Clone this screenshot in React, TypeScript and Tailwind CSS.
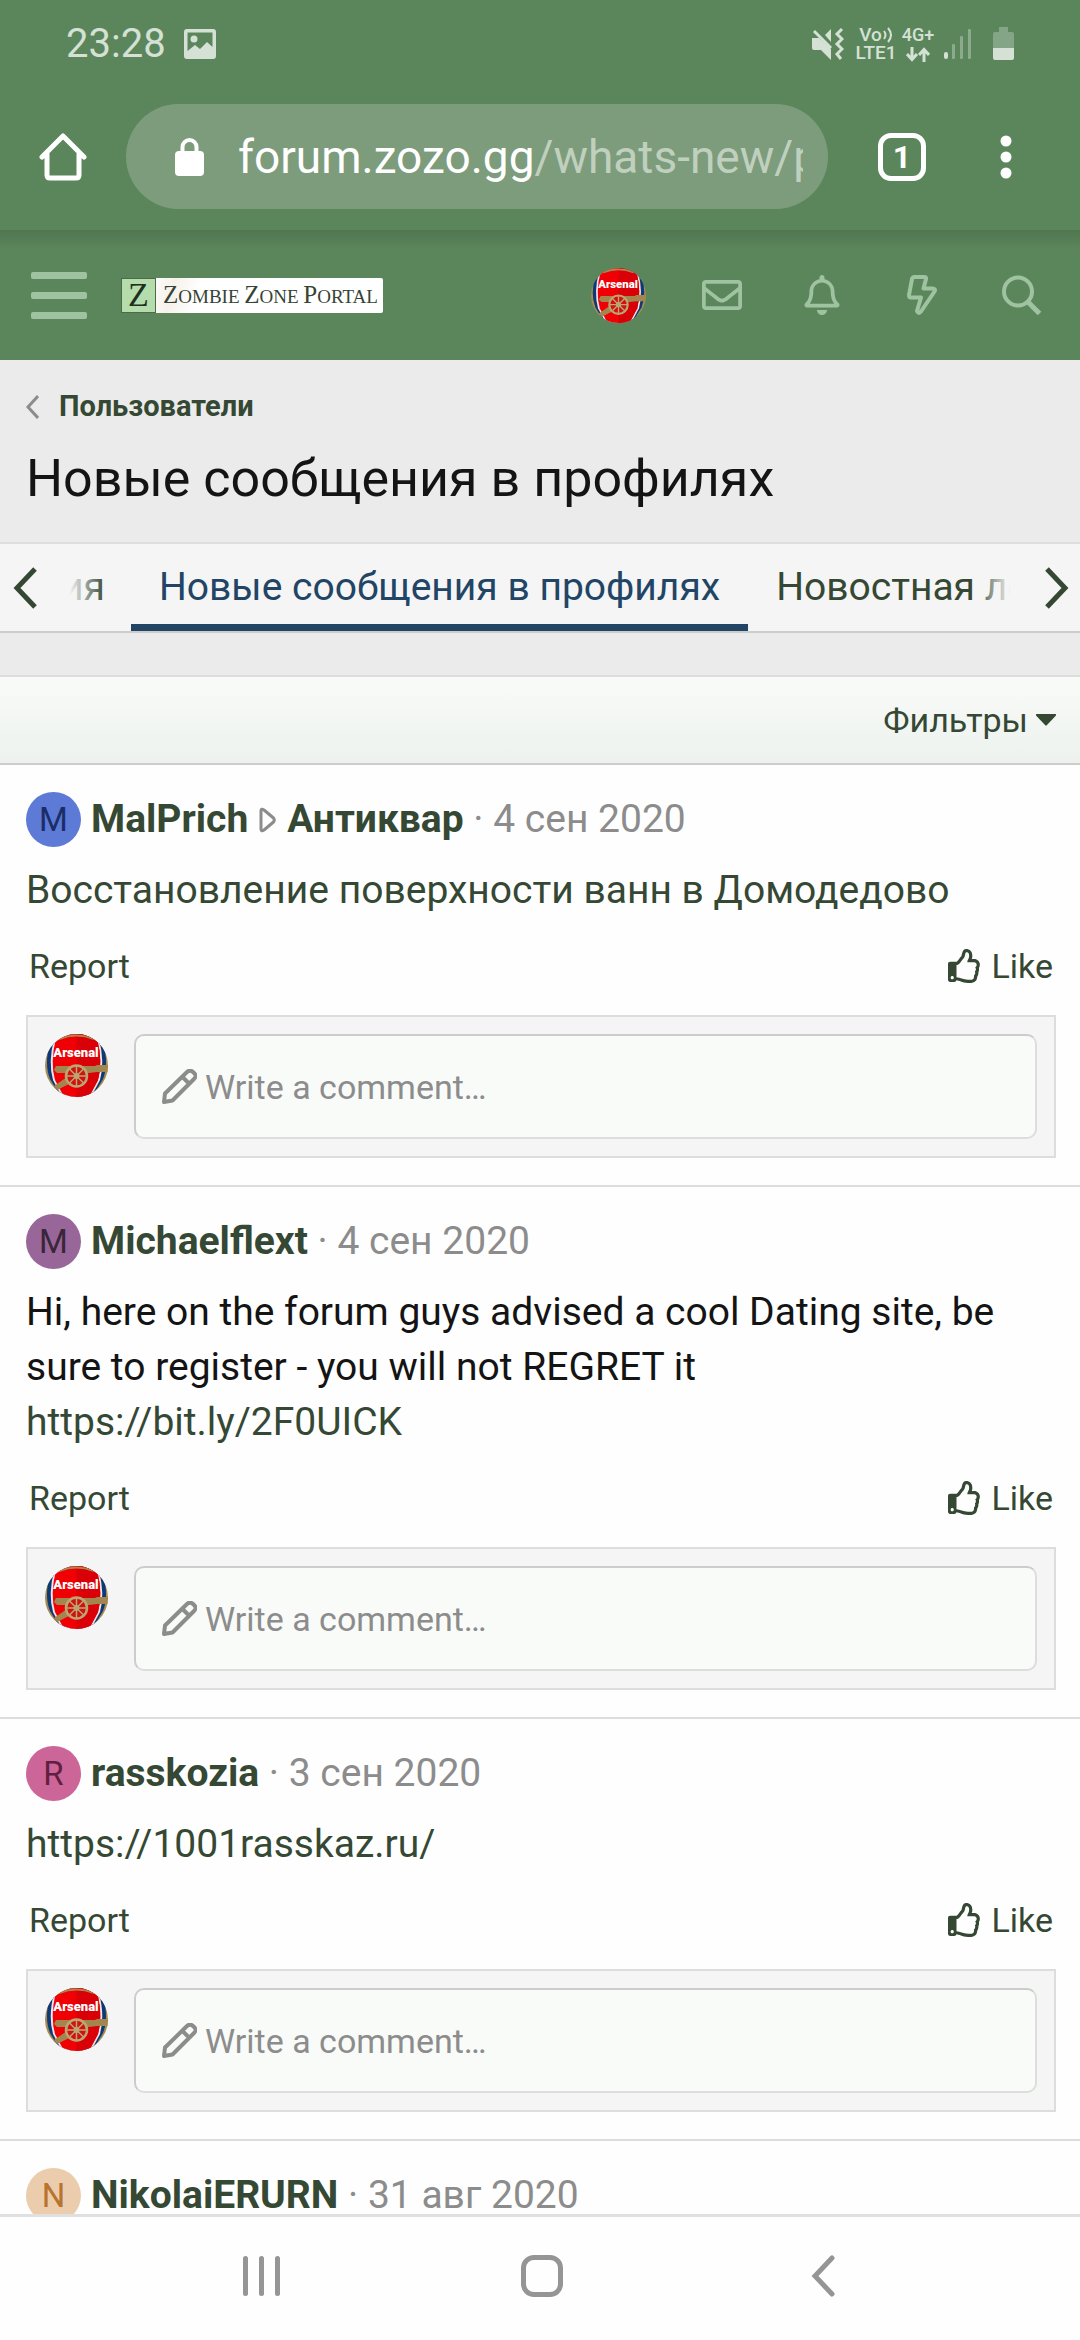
import type { ReactNode } from "react";
import { FaRegBell, FaRegEnvelope, FaRegThumbsUp } from "react-icons/fa";

type Post = {
  id: number;
  author: string;
  target?: string;
  date: string;
  letter: string;
  avatarClass: string;
  body: ReactNode;
};

const linkClass = "text-[#354834]";

const posts: Post[] = [
  {
    id: 1,
    author: "MalPrich",
    target: "Антиквар",
    date: "4 сен 2020",
    letter: "M",
    avatarClass: "bg-[#5c7ad6] text-[#1b2d66]",
    body: <a href="#" className={linkClass}>Восстановление поверхности ванн в Домодедово</a>,
  },
  {
    id: 2,
    author: "Michaelflext",
    date: "4 сен 2020",
    letter: "M",
    avatarClass: "bg-[#996699] text-[#392639]",
    body: (
      <>
        Hi, here on the forum guys advised a cool Dating site, be sure to register - you will not REGRET it
        <br />
        <a href="#" className={linkClass}>https://bit.ly/2F0UICK</a>
      </>
    ),
  },
  {
    id: 3,
    author: "rasskozia",
    date: "3 сен 2020",
    letter: "R",
    avatarClass: "bg-[#cc6699] text-[#602040]",
    body: <a href="#" className={linkClass}>https://1001rasskaz.ru/</a>,
  },
  {
    id: 4,
    author: "NikolaiERURN",
    date: "31 авг 2020",
    letter: "N",
    avatarClass: "bg-[#ebccad] text-[#b8732e]",
    body: "",
  },
];

function Crest({ className }: { className: string }) {
  return (
    <svg viewBox="0 0 63 63" className={className} role="img" aria-label="Arsenal">
      <defs>
        <clipPath id="crest-clip">
          <circle cx="31.5" cy="31.5" r="31.5" />
        </clipPath>
      </defs>
      <g clipPath="url(#crest-clip)">
        <rect width="63" height="63" fill="#a68a52" />
        <path d="M5 8Q-1 30 5 45L16 63H47L58 45Q64 30 58 8L50 0H13Z" fill="#0a3a78" />
        <path d="M9 5Q3 28 8 46L17 63H46L55 46Q60 28 54 5L44 0H19Z" fill="#f3e4e6" />
        <path d="M11 4Q5 28 10 46L19 63H44L53 46Q58 28 52 4L44 0H19Z" fill="#f00005" />
        <path d="M31.5 0H44L52 4Q58 28 53 46L44 63H31.500Z" fill="#d90008" />
        <path d="M14 5Q31.500 -2 49 5" stroke="#a68a52" strokeWidth="2" fill="none" />
        <path d="M11 32H50L52 31H63V38H52L44 39H12L9 36Z" fill="#a2864e" />
        <path d="M22 43L9 52L12 56L26 49Z" fill="#a2864e" />
        <circle cx="31.500" cy="42" r="10.500" fill="#cf1410" stroke="#bda573" strokeWidth="2.500" />
        <path d="M31.500 32V52M21.500 42H41.500M24.500 35L38.500 49M38.500 35L24.500 49" stroke="#bda573" strokeWidth="1.500" />
        <circle cx="31.500" cy="42" r="3" fill="#bda573" />
      </g>
      <text x="31" y="23" textAnchor="middle" fontFamily="Roboto, sans-serif" fontWeight="900" fontSize="13" fill="#fff">
        Arsenal
      </text>
    </svg>
  );
}

function StatusBar() {
  return (
    <div className="flex h-[83px] items-center pt-1 pr-[66px] pl-[66px] text-[#d5e1d5]">
      <span className="text-[40px] leading-none">23:28</span>
      <svg viewBox="0 0 32 30" className="ml-[18px] h-[30px] w-8">
        <path
          fillRule="evenodd"
          fill="currentColor"
          d="M3 0H29Q32 0 32 3V27Q32 30 29 30H3Q0 30 0 27V3Q0 0 3 0ZM3.500 3.500V22L11 16L16 20L23 13L28.500 18V3.500Z"
        />
        <circle cx="10" cy="10" r="3.500" fill="currentColor" />
      </svg>
      <div className="ml-auto flex items-center">
        <svg viewBox="0 0 32 32" className="h-8 w-8" fill="currentColor">
          <path d="M0 10H7L19 21V32L9 22H2Q0 22 0 20Z" />
          <path d="M13 7L19 1V14Z" />
          <path d="M2 3L19 20" stroke="currentColor" strokeWidth="3" />
          <path d="M30 1L25 6L30 11L25 16L30 21L25 26L29 31" fill="none" stroke="currentColor" strokeWidth="3" />
        </svg>
        <div className="ml-3 flex w-10 flex-col items-center text-[19px] leading-[18px] font-medium">
          <span className="flex items-center">
            Vo
            <svg viewBox="0 0 11 18" className="h-[18px] w-[11px]" fill="none" stroke="currentColor" strokeWidth="2">
              <path d="M2 5Q5 9 2 13M6 2Q12 9 6 16" />
            </svg>
          </span>
          <span>LTE1</span>
        </div>
        <div className="ml-1.5 flex w-8 flex-col items-center text-[18px] leading-[17px] font-medium">
          <span>4G+</span>
          <svg viewBox="0 0 24 15" className="mt-1 h-[15px] w-6" fill="none" stroke="currentColor" strokeWidth="3">
            <path d="M6 0V12M1 7L6 12.500L11 7M18 15V3M13 8L18 2.500L23 8" />
          </svg>
        </div>
        <svg viewBox="0 0 27 30" className="ml-[10px] h-[30px] w-[27px]" fill="currentColor">
          <rect y="23" width="4" height="7" rx="2" />
          <g opacity="0.400">
            <rect x="8" y="15" width="3" height="15" rx="1" />
            <rect x="16" y="7" width="3" height="23" rx="1" />
            <rect x="24" width="3" height="30" rx="1" />
          </g>
        </svg>
        <svg viewBox="0 0 21 33" className="ml-[22px] h-[33px] w-[21px]" fill="currentColor">
          <path d="M6 0H15V5H19Q21 5 21 7V21H0V7Q0 5 2 5H6Z" opacity="0.350" />
          <path d="M0 21H21V31Q21 33 19 33H2Q0 33 0 31Z" />
        </svg>
      </div>
    </div>
  );
}

function BrowserBar() {
  return (
    <div className="flex items-center pt-[21px] pb-[21px] text-white">
      <button aria-label="Home" className="flex w-[126px] shrink-0 justify-center">
        <svg viewBox="0 0 48 48" className="h-12 w-12" fill="none" stroke="currentColor" strokeWidth="5" strokeLinecap="round" strokeLinejoin="round">
          <path d="M3 24L24 3L45 24M8 21V42Q8 45 11 45H37Q40 45 40 42V21" />
        </svg>
      </button>
      <button
        aria-label="Address bar"
        className="flex h-[105px] min-w-0 flex-1 items-center rounded-full bg-[#7d9c7c] pr-[25px] pl-[49px] text-left"
      >
        <svg viewBox="0 0 29 38" className="h-[38px] w-[29px] shrink-0">
          <rect y="13" width="29" height="25" rx="4" fill="currentColor" />
          <path d="M7.500 15V9A7 7 0 0 1 21.500 9V15" fill="none" stroke="currentColor" strokeWidth="4" />
        </svg>
        <span className="ml-[34px] overflow-hidden text-[46px] leading-[60px] whitespace-nowrap">
          forum.zozo.gg<span className="text-[#c0d0bf]">/whats-new/profile-posts/</span>
        </span>
      </button>
      <div className="flex shrink-0 px-[22px]">
        <button aria-label="Tabs" className="flex w-[104px] justify-center">
          <span className="flex h-12 w-12 items-center justify-center rounded-[13px] border-[5px] border-white text-[32px] leading-none font-bold">
            1
          </span>
        </button>
        <button aria-label="Menu" className="flex w-[104px] items-center justify-center">
          <svg viewBox="0 0 12 44" className="h-11 w-3" fill="currentColor">
            <circle cx="6" cy="6" r="5.500" />
            <circle cx="6" cy="22" r="5.500" />
            <circle cx="6" cy="38" r="5.500" />
          </svg>
        </button>
      </div>
    </div>
  );
}

function SiteHeader() {
  return (
    <header className="bg-linear-to-b from-[#517650] to-[#5b865c] to-15%">
      <div className="flex h-[130px] items-center pr-2 pl-[31px] text-[#9fc3a0]">
        <button aria-label="Menu" className="flex flex-col gap-[13px]">
          <span className="h-[7px] w-14 rounded-xs bg-current" />
          <span className="h-[7px] w-14 rounded-xs bg-current" />
          <span className="h-[7px] w-14 rounded-xs bg-current" />
        </button>
        <a
          href="#"
          className="ml-[34px] flex h-[35px] items-center rounded-xs bg-linear-105 from-white from-10% via-[#f6f1ea] via-20% to-white to-30% pr-[5px] font-['Liberation_Serif',serif] whitespace-nowrap text-[#364336]"
        >
          <span className="flex h-[35px] w-[35px] items-center justify-center border border-[#4d6b4b] bg-[#b5dcab] text-[34px] leading-none text-[#20301f]">
            Z
          </span>
          <span className="ml-[7px] text-[19px] leading-[35px]">
            <span className="text-[25px]">Z</span>OMBIE <span className="text-[25px]">Z</span>ONE{" "}
            <span className="text-[25px]">P</span>ORTAL
          </span>
        </a>
        <div className="ml-auto flex items-center">
          <button aria-label="Account" className="flex w-[108px] justify-center">
            <Crest className="h-[55px] w-[55px]" />
          </button>
          <button aria-label="Conversations" className="flex w-[100px] justify-center">
            <FaRegEnvelope size={40} />
          </button>
          <button aria-label="Alerts" className="flex w-[100px] justify-center">
            <FaRegBell size={40} />
          </button>
          <button aria-label="What's new" className="flex w-[100px] justify-center">
            <svg viewBox="0 0 30 40" className="h-10 w-[30px]" fill="none" stroke="currentColor" strokeWidth="4" strokeLinejoin="round">
              <path d="M7.500 2H17Q19.500 2 19 4L16.500 13.500H25.500Q29 13.500 27.500 16.500L14 36.500Q11.500 39.500 10 36L14 22.500H4Q2 22.500 2 20L5 4Q5.500 2 7.500 2Z" />
            </svg>
          </button>
          <button aria-label="Search" className="flex w-[100px] justify-center">
            <svg viewBox="0 0 40 40" className="h-10 w-10" fill="none" stroke="currentColor" strokeWidth="4">
              <circle cx="16" cy="16.500" r="14" />
              <path d="M26 27L37.500 38.500" strokeWidth="5" />
            </svg>
          </button>
        </div>
      </div>
    </header>
  );
}

function Tabs() {
  return (
    <nav className="relative flex h-[91px] overflow-hidden border-y-2 border-t-[#ddd] border-b-[#ccc] bg-[#f5f5f5] text-[39px] whitespace-nowrap text-[#354834]">
      <a href="#" className="flex w-[131px] shrink-0 items-center justify-end overflow-hidden pr-[26px]">
        Новые сообщения
      </a>
      <a
        href="#"
        aria-current="page"
        className="flex shrink-0 items-center border-b-[7px] border-[#224566] px-7 pt-[7px] text-[#224566]"
      >
        Новые сообщения в профилях
      </a>
      <a href="#" className="flex shrink-0 items-center px-7">
        Новостная лента
      </a>
      <button
        aria-label="Scroll left"
        className="absolute inset-y-0 left-0 flex w-[105px] items-center bg-linear-to-r from-[#f5f5f5] from-66% to-[#f5f5f500] pl-[13px]"
      >
        <svg viewBox="0 0 24 42" className="h-[42px] w-6" fill="none" stroke="currentColor" strokeWidth="5">
          <path d="M22 2L4 21L22 40" />
        </svg>
      </button>
      <button
        aria-label="Scroll right"
        className="absolute inset-y-0 right-0 flex w-[105px] items-center justify-end bg-linear-to-l from-[#f5f5f5] from-66% to-[#f5f5f500] pr-[11px]"
      >
        <svg viewBox="0 0 24 42" className="h-[42px] w-6" fill="none" stroke="currentColor" strokeWidth="5">
          <path d="M2 2L20 21L2 40" />
        </svg>
      </button>
    </nav>
  );
}

function PostItem({ post }: { post: Post }) {
  return (
    <article className="border-b-2 border-[#ddd] pt-[27px] pr-6 pb-[27px] pl-[26px]">
      <div className="flex h-[55px] items-center text-[39px] whitespace-nowrap text-[#8c8c8c]">
        <span className={`flex h-[55px] w-[55px] items-center justify-center rounded-full text-[33px] ${post.avatarClass}`}>
          {post.letter}
        </span>
        <a href="#" className="ml-[10px] font-bold text-[#354834]">{post.author}</a>
        {post.target && (
          <>
            <svg viewBox="0 0 17 26" className="mx-[11px] h-[26px] w-[17px]" fill="none" stroke="currentColor" strokeWidth="3" strokeLinejoin="round">
              <path d="M2 4Q2 1 5 3L14.500 11Q16 13 14.500 15L5 23Q2 25 2 22Z" />
            </svg>
            <a href="#" className="font-bold text-[#354834]">{post.target}</a>
          </>
        )}
        <span className="whitespace-pre"> · {post.date}</span>
      </div>
      <div className="mt-4 text-[39px] leading-[55px] text-[#141414]">{post.body}</div>
      <div className="mt-6 flex justify-between px-[3px] text-[34px] leading-[48px] text-[#354834]">
        <a href="#">Report</a>
        <button className="flex items-center gap-[9px]">
          <FaRegThumbsUp size={34} />
          Like
        </button>
      </div>
      <div className="mt-[25px] flex items-start border-2 border-[#ddd] bg-[#f5f5f5] p-[17px]">
        <Crest className="h-[63px] w-[63px] shrink-0" />
        <label className="ml-[26px] flex h-[105px] flex-1 items-center rounded-[10px] border-2 border-t-[#ccc] border-r-[#ddd] border-b-[#ddd] border-l-[#ccc] bg-[#f9fbf9] px-[26px] text-[#8c8c8c]">
          <svg viewBox="0 0 35 35" className="h-[35px] w-[35px] shrink-0" fill="none" stroke="currentColor" strokeWidth="4" strokeLinejoin="round">
            <path d="M2 33L3 24.500L25 3Q28 0 31 3L32.500 4.500Q35 7 32 10L10.500 31.500ZM20.500 8L27.500 15" />
          </svg>
          <input
            type="text"
            aria-label="Write a comment"
            placeholder="Write a comment…"
            className="ml-2 min-w-0 flex-1 text-[34px] leading-[48px] outline-none placeholder:text-[#8c8c8c]"
          />
        </label>
      </div>
    </article>
  );
}

function NavigationBar() {
  return (
    <div className="flex h-[126px] shrink-0 items-center justify-center border-t-[3px] border-[#e0e0e0] bg-[#fefefe] pb-[5px] pl-1 text-[#959595]">
      <button aria-label="Recent apps" className="flex w-[281px] justify-center gap-[11px]">
        <span className="h-10 w-[5px] rounded-full bg-current" />
        <span className="h-10 w-[5px] rounded-full bg-current" />
        <span className="h-10 w-[5px] rounded-full bg-current" />
      </button>
      <button aria-label="Home screen" className="flex w-[281px] justify-center">
        <span className="h-[42px] w-[42px] rounded-[13px] border-[5px] border-current" />
      </button>
      <button aria-label="Back" className="flex w-[281px] justify-center">
        <svg viewBox="0 0 24 42" className="h-[42px] w-6" fill="none" stroke="currentColor" strokeWidth="5" strokeLinecap="round">
          <path d="M21 3L4 21L21 39" />
        </svg>
      </button>
    </div>
  );
}

export default function App() {
  return (
    <div className="flex h-screen flex-col overflow-hidden bg-[#fefefe] font-[Roboto,sans-serif]">
      <div className="shrink-0 bg-[#5b865c]">
        <StatusBar />
        <BrowserBar />
      </div>
      <div className="min-h-0 flex-1 overflow-hidden">
        <SiteHeader />
        <div className="bg-[#ebebeb] px-[26px] pt-[26px] pb-[27px]">
          <a href="#" className="flex items-center text-[29px] leading-[41px] font-bold text-[#354834]">
            <svg viewBox="0 0 13 24" className="mr-5 h-6 w-[13px]" fill="none" stroke="#8c8c8c" strokeWidth="3">
              <path d="M12 1L2 12L12 23" />
            </svg>
            Пользователи
          </a>
          <h1 className="mt-[15px] text-[52px] leading-[73px] text-[#141414]">Новые сообщения в профилях</h1>
        </div>
        <Tabs />
        <div className="h-[42px] bg-[#ebebeb]" />
        <div className="flex h-[90px] items-center justify-end border-y-2 border-t-[#ddd] border-b-[#ccc] bg-linear-to-b from-[#f9fbf9] to-[#edf2ee] pr-6">
          <button className="flex items-center gap-2 text-[34px] leading-[48px] text-[#354834]">
            Фильтры
            <svg viewBox="0 0 20 12" className="h-3 w-5" fill="currentColor">
              <path d="M1 0H19Q21 0 19.500 2L11 11Q10 12 9 11L0.500 2Q-1 0 1 0Z" />
            </svg>
          </button>
        </div>
        {posts.map((post) => (
          <PostItem key={post.id} post={post} />
        ))}
      </div>
      <NavigationBar />
    </div>
  );
}
